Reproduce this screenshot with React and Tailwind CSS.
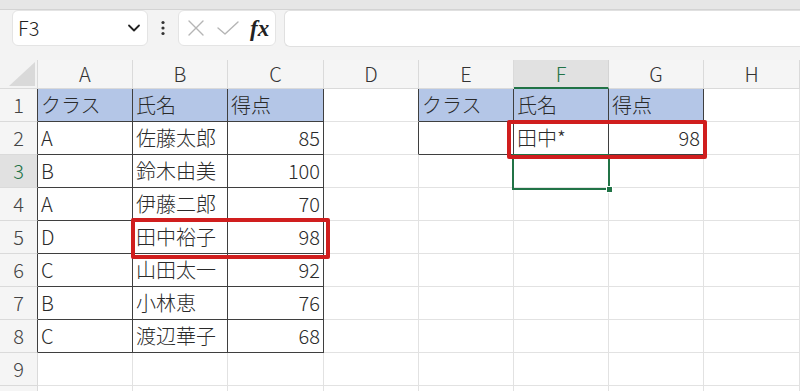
import React from "react";

const COLS = ["A", "B", "C", "D", "E", "F", "G", "H"];
const DATA = {
  1: ["クラス", "氏名", "得点", "", "クラス", "氏名", "得点", ""],
  2: ["A", "佐藤太郎", "85", "", "", "田中*", "98", ""],
  3: ["B", "鈴木由美", "100", "", "", "", "", ""],
  4: ["A", "伊藤二郎", "70", "", "", "", "", ""],
  5: ["D", "田中裕子", "98", "", "", "", "", ""],
  6: ["C", "山田太一", "92", "", "", "", "", ""],
  7: ["B", "小林恵", "76", "", "", "", "", ""],
  8: ["C", "渡辺華子", "68", "", "", "", "", ""],
  9: ["", "", "", "", "", "", "", ""],
  10: ["", "", "", "", "", "", "", ""],
};
const NUMERIC = new Set(["85", "100", "70", "98", "92", "76", "68"]);

function inTable(r, c) {
  return (r >= 1 && r <= 8 && c >= 0 && c <= 2) || (r >= 1 && r <= 2 && c >= 4 && c <= 6);
}

const FONT = { fontFamily: '"Noto Sans CJK JP", "Noto Sans", sans-serif' };

function Cell({ r, c, v }) {
  const darkR = inTable(r, c) || inTable(r, c + 1);
  const darkB = inTable(r, c) || inTable(r + 1, c);
  const header = r === 1 && inTable(r, c);
  const num = NUMERIC.has(v);
  return (
    <div
      className={[
        "border-r border-b flex items-center text-[20px] font-light leading-none text-[#2a2a2a] whitespace-nowrap overflow-hidden",
        darkR ? "border-r-[#3f3f3f]" : "border-r-[#e2e2e2]",
        darkB ? "border-b-[#3f3f3f]" : "border-b-[#e2e2e2]",
        header ? "bg-[#b4c6e7]" : "bg-white",
        num ? "justify-end pr-[3px]" : "justify-start pl-[3px]",
      ].join(" ")}
    >
      {v}
    </div>
  );
}

export default function App() {
  const rows = [1, 2, 3, 4, 5, 6, 7, 8, 9, 10];
  return (
    <div className="w-[800px] h-[391px] overflow-hidden bg-white relative" style={FONT}>
      {/* top strip */}
      <div className="h-[10px] bg-[#e6e6e6] border-b border-[#d3d3d3]" />
      {/* formula bar */}
      <div className="h-[50px] bg-[#f3f3f3] flex items-start">
        <div className="ml-[12px] w-[136px] h-[36px] rounded-[6px] bg-white border border-[#e4e4e4] flex items-center justify-between pl-[5px] pr-[6px]">
          <span className="text-[20px] font-light text-[#222] leading-none">F3</span>
          <svg width="14" height="10" viewBox="0 0 14 10">
            <path d="M2 2.5 L7 7.5 L12 2.5" fill="none" stroke="#222" strokeWidth="1.8" strokeLinecap="round" strokeLinejoin="round" />
          </svg>
        </div>
        <div className="w-[30px] h-[36px] flex items-center justify-center">
          <svg width="4" height="16" viewBox="0 0 4 16">
            <circle cx="2" cy="2.5" r="1.6" fill="#333" />
            <circle cx="2" cy="8" r="1.6" fill="#333" />
            <circle cx="2" cy="13.5" r="1.6" fill="#333" />
          </svg>
        </div>
        <div className="w-[98px] h-[36px] rounded-[6px] bg-white border border-[#e4e4e4] flex items-center pl-[8px]">
          <svg width="18" height="18" viewBox="0 0 18 18">
            <path d="M2 2 L16 16 M16 2 L2 16" stroke="#b5b5b5" strokeWidth="1.4" strokeLinecap="round" />
          </svg>
          <svg width="24" height="18" viewBox="0 0 24 18" className="ml-[11px]">
            <path d="M2 9 L9 15 L22 3" fill="none" stroke="#b5b5b5" strokeWidth="1.4" strokeLinecap="round" strokeLinejoin="round" />
          </svg>
          <span
            className="ml-[10px] text-[23px] leading-none italic font-bold text-[#222]"
            style={{ fontFamily: '"Liberation Serif", "DejaVu Serif", serif' }}
          >
            fx
          </span>
        </div>
        <div className="ml-[8px] flex-1 h-[37px] rounded-l-[6px] bg-white border border-r-0 border-[#e0e0e0]" />
      </div>

      {/* sheet */}
      <div className="relative">
        <div className="grid grid-cols-[38px_95px_95px_96px_95px_95px_95px_95px_96px] grid-rows-[29px_repeat(10,33px)]">
          {/* corner */}
          <div className="bg-[#f3f3f3] border-r border-b border-[#dadada] flex items-end justify-end p-[2px]">
            <svg width="26" height="24" viewBox="0 0 26 24">
              <path d="M26 0 L26 24 L0 24 Z" fill="#d9d9d9" />
            </svg>
          </div>
          {COLS.map((c) => {
            const sel = c === "F";
            return (
              <div
                key={c}
                className={[
                  "flex items-center justify-center text-[20px] font-light leading-none border-r",
                  sel
                    ? "bg-[#e1e1e1] text-[#217346] border-b-2 border-b-[#217346] border-r-[#d4d4d4]"
                    : "bg-[#f5f5f5] text-[#333] border-b border-b-[#dadada] border-r-[#dadada]",
                ].join(" ")}
              >
                {c}
              </div>
            );
          })}
          {rows.map((r) => (
            <React.Fragment key={r}>
              <div
                className={[
                  "flex items-center justify-center text-[20px] font-light leading-none border-r border-b border-b-[#dadada]",
                  r === 3 ? "bg-[#e1e1e1] text-[#217346]" : "bg-[#f5f5f5] text-[#444]",
                  r <= 8 ? "border-r-[#3f3f3f]" : "border-r-[#dadada]",
                ].join(" ")}
              >
                {r < 10 ? r : ""}
              </div>
              {DATA[r].map((v, c) => (
                <Cell key={c} r={r} c={c} v={v} />
              ))}
            </React.Fragment>
          ))}
        </div>

        {/* selected cell F3 */}
        <div className="absolute left-[512px] top-[94px] w-[98px] h-[36px] border-2 border-[#217346] pointer-events-none" />
        <div className="absolute left-[606px] top-[126px] w-[7px] h-[7px] bg-[#217346] border border-white" />

        {/* red highlight boxes */}
        <div className="absolute left-[131px] top-[158px] w-[199px] h-[41px] border-[4px] border-[#d01e1e] rounded-[2px]" />
        <div className="absolute left-[507px] top-[60px] w-[200px] h-[39px] border-[4px] border-[#d01e1e] rounded-[2px]" />
      </div>
    </div>
  );
}
